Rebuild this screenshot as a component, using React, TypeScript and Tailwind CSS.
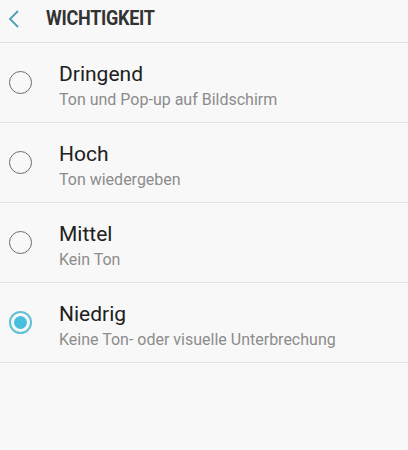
import React, { useState } from 'react';

const options = [
  { title: 'Dringend', sub: 'Ton und Pop-up auf Bildschirm' },
  { title: 'Hoch', sub: 'Ton wiedergeben' },
  { title: 'Mittel', sub: 'Kein Ton' },
  { title: 'Niedrig', sub: 'Keine Ton- oder visuelle Unterbrechung' },
];

const Radio = ({ checked }: { checked: boolean }) =>
  checked ? (
    <div className="w-[23px] h-[23px] rounded-full border-2 border-[#5fc0d6] flex items-center justify-center">
      <div className="w-[13px] h-[13px] rounded-full bg-[#49bfe0]" />
    </div>
  ) : (
    <div className="w-[23px] h-[23px] rounded-full border-[1.5px] border-[#6b6b6b]" />
  );

export default function App() {
  const [selected, setSelected] = useState(3);

  return (
    <div className="w-[408px] h-[450px] bg-[#f8f8f8] font-['Roboto',sans-serif]">
      {/* Header */}
      <div className="h-[43px] flex items-center border-b border-[#e0e0e0]">
        <svg width="12" height="18" viewBox="0 0 12 18" className="ml-[8px] mt-[-4px]">
          <path d="M10 1 L2 9 L10 17" fill="none" stroke="#4a9fb3" strokeWidth="1.8" />
        </svg>
        <h1 className="ml-[26px] mt-[-6px] text-[20px] font-bold text-[#333] tracking-[-0.3px] scale-x-[0.9] origin-left">
          WICHTIGKEIT
        </h1>
      </div>

      {/* Options */}
      {options.map((opt, i) => (
        <div
          key={opt.title}
          onClick={() => setSelected(i)}
          className="h-[80px] flex items-center border-b border-[#e2e2e2] cursor-pointer"
        >
          <div className="w-[59px] pl-[9px] shrink-0">
            <Radio checked={selected === i} />
          </div>
          <div className="flex flex-col mt-[6px]">
            <span className="text-[21px] leading-[26px] text-[#202020]">{opt.title}</span>
            <span className="text-[16px] leading-[22px] text-[#8c8c8c] mt-[2px]">{opt.sub}</span>
          </div>
        </div>
      ))}
    </div>
  );
}
